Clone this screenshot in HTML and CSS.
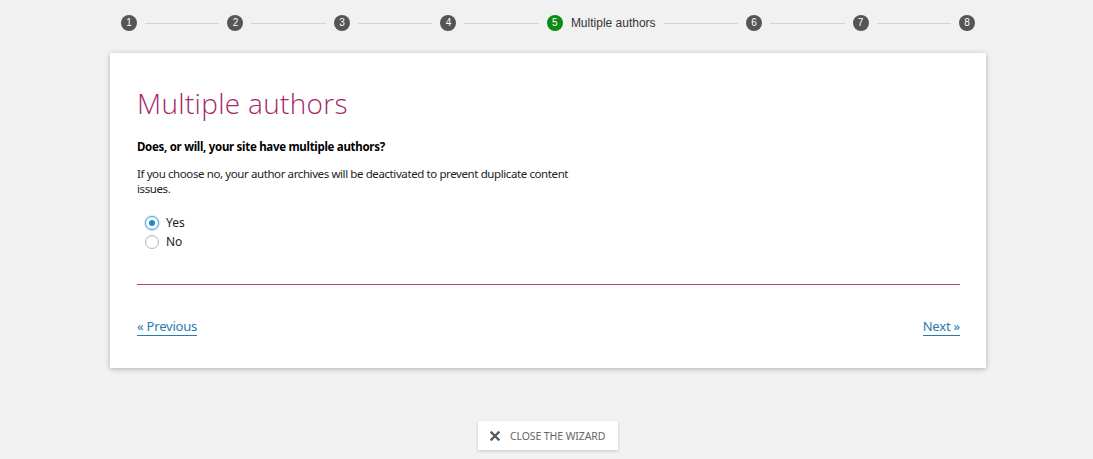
FILE: index.html
```html
<!DOCTYPE html>
<html lang="en">
<head>
<meta charset="utf-8">
<title>Multiple authors</title>
<link rel="stylesheet" href="styles.css">
</head>
<body>
<div class="wizard">
  <ol class="stepper">
    <li class="step"><span class="dot">1</span></li>
    <li class="line"></li>
    <li class="step"><span class="dot">2</span></li>
    <li class="line"></li>
    <li class="step"><span class="dot">3</span></li>
    <li class="line"></li>
    <li class="step"><span class="dot">4</span></li>
    <li class="line"></li>
    <li class="step active"><span class="dot">5</span><span class="step-label">Multiple authors</span></li>
    <li class="line"></li>
    <li class="step"><span class="dot">6</span></li>
    <li class="line"></li>
    <li class="step"><span class="dot">7</span></li>
    <li class="line"></li>
    <li class="step"><span class="dot">8</span></li>
  </ol>

  <main class="card">
    <h1 class="title">Multiple authors</h1>
    <p class="question">Does, or will, your site have multiple authors?</p>
    <p class="desc">If you choose no, your author archives will be deactivated to prevent duplicate content issues.</p>
    <div class="choices">
      <label class="choice"><input type="radio" name="multi" checked><span class="radio"></span>Yes</label>
      <label class="choice"><input type="radio" name="multi"><span class="radio"></span>No</label>
    </div>
    <div class="divider"></div>
    <nav class="pager">
      <a href="#" class="pager-link">« Previous</a>
      <a href="#" class="pager-link">Next »</a>
    </nav>
  </main>

  <div class="close-wrap">
    <button class="close-btn" type="button">
      <svg class="close-icon" viewBox="0 0 10 10" width="10" height="10" aria-hidden="true"><path d="M1.5 1.5 L8.5 8.5 M8.5 1.5 L1.5 8.5" stroke="#555d66" stroke-width="2.4" stroke-linecap="square"/></svg>
      <span>CLOSE THE WIZARD</span>
    </button>
  </div>
</div>
</body>
</html>
```
FILE: styles.css
```css
* { box-sizing: border-box; }

html, body {
  margin: 0;
  padding: 0;
  background: #f1f1f1;
}

body {
  font-family: "Noto Sans", "Open Sans", sans-serif;
  color: #222;
  height: 459px;
  overflow: hidden;
}

.wizard {
  width: 876px;
  margin: 0 0 0 110px;
  padding-top: 15px;
}

.stepper {
  list-style: none;
  margin: 0;
  padding: 0 11px;
  display: flex;
  align-items: center;
  height: 16px;
}

.step {
  display: flex;
  align-items: center;
  gap: 8px;
}

.dot {
  width: 16px;
  height: 16px;
  border-radius: 50%;
  background: #555;
  color: #fff;
  font-family: "Liberation Sans", Arial, sans-serif;
  font-size: 10px;
  line-height: 16px;
  text-align: center;
}

.step.active .dot {
  background: #0a8c12;
}

.step-label {
  font-family: "Liberation Sans", Arial, sans-serif;
  font-size: 12px;
  color: #333;
}

.line {
  flex: 1;
  height: 1px;
  background: #d4d4d4;
  margin: 0 8px;
}

.card {
  margin-top: 22px;
  background: #fff;
  box-shadow: 0 1px 5px rgba(0,0,0,0.28);
  padding: 32px 26px 31px 27px;
  height: 315px;
}

.title {
  margin: 0;
  font-family: "Open Sans", "Noto Sans", sans-serif;
  font-weight: 300;
  font-size: 28px;
  line-height: 36px;
  color: #a4286a;
  letter-spacing: 0.3px;
}

.question {
  margin: 18px 0 0;
  font-size: 11.5px;
  font-weight: 700;
  line-height: 16px;
  color: #000;
  letter-spacing: -0.3px;
}

.desc {
  margin: 11px 0 0;
  font-size: 11.5px;
  line-height: 15px;
  color: #222;
  max-width: 450px;
  letter-spacing: -0.4px;
}

.choices {
  margin: 19px 0 0 8px;
  display: flex;
  flex-direction: column;
  gap: 3px;
}

.choice {
  display: flex;
  align-items: center;
  gap: 7px;
  font-size: 12px;
  line-height: 16px;
  color: #222;
}

.choice input {
  position: absolute;
  opacity: 0;
  width: 0;
  height: 0;
  margin: 0;
}

.radio {
  width: 14px;
  height: 14px;
  border-radius: 50%;
  border: 1px solid #b4b9be;
  background: #fff;
  box-shadow: inset 0 1px 2px rgba(0,0,0,0.08);
  display: flex;
  align-items: center;
  justify-content: center;
}

.choice input:checked + .radio {
  border-color: #5b9dd9;
  box-shadow: 0 0 2px rgba(30,140,190,0.6);
}

.choice input:checked + .radio::after {
  content: "";
  width: 6px;
  height: 6px;
  border-radius: 50%;
  background: #1e8cbe;
}

.divider {
  margin: 34px 0 0;
  height: 1px;
  background: #b0407a;
}

.pager {
  margin-top: 33px;
  display: flex;
  justify-content: space-between;
}

.pager-link {
  font-size: 13px;
  line-height: 17px;
  color: #2a7ab0;
  text-decoration: none;
  border-bottom: 1px solid #2a7ab0;
  letter-spacing: -0.2px;
}

.close-wrap {
  display: flex;
  justify-content: center;
  margin-top: 53px;
}

.close-btn {
  width: 140px;
  height: 29px;
  background: #fff;
  border: 0;
  box-shadow: 0 1px 3px rgba(0,0,0,0.18);
  display: flex;
  align-items: center;
  gap: 10px;
  padding: 0 0 0 12px;
  font-family: "Noto Sans", "Open Sans", sans-serif;
  font-size: 10.5px;
  color: #666;
  letter-spacing: -0.1px;
  cursor: pointer;
}

.close-icon {
  flex: none;
}
```
